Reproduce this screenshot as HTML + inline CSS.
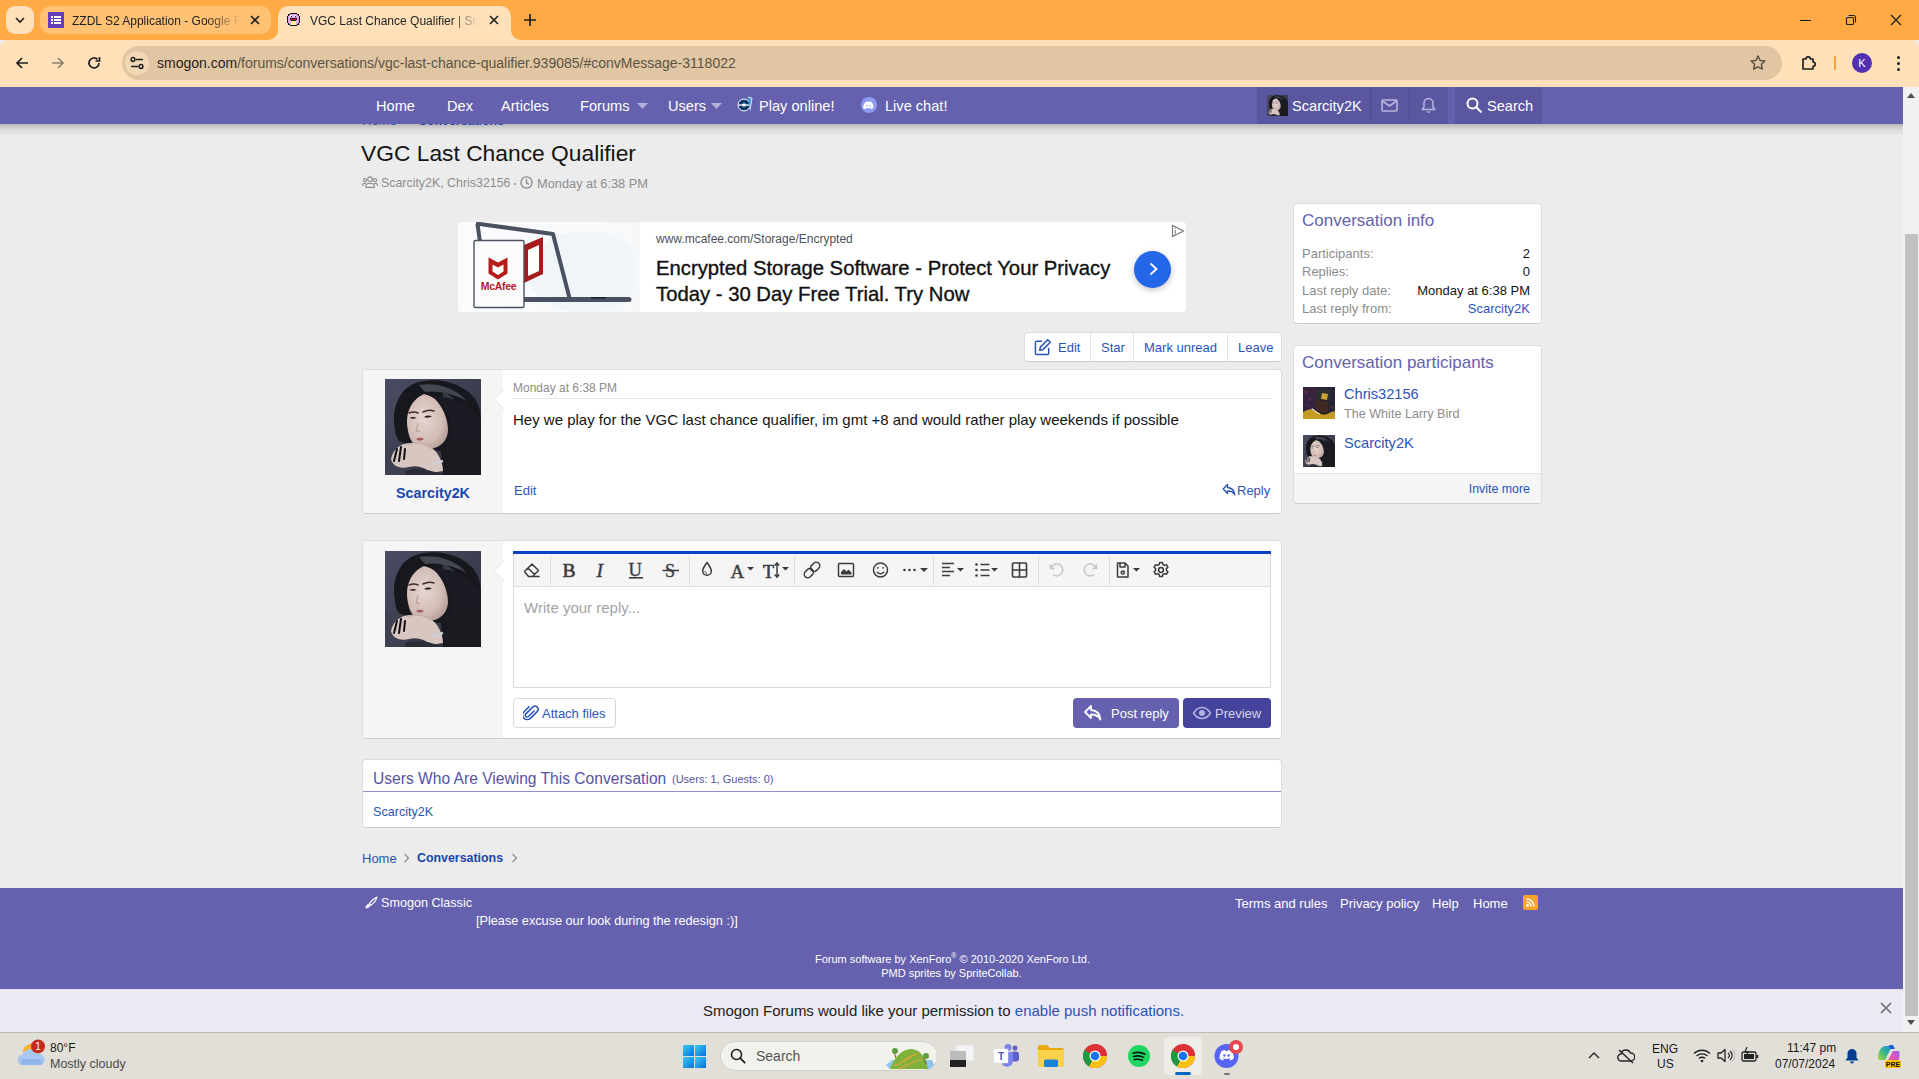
<!DOCTYPE html>
<html><head><meta charset="utf-8">
<style>
*{box-sizing:border-box;margin:0;padding:0}
html,body{width:1919px;height:1079px;overflow:hidden;font-family:"Liberation Sans",sans-serif;background:#ececec;position:relative}
.a{position:absolute}
.nw{white-space:nowrap}
/* chrome */
#frame{left:0;top:0;width:1919px;height:40px;background:#ffaa45}
#toolbar{left:0;top:40px;width:1919px;height:47px;background:#ffe0b9;border-radius:8px 8px 0 0}
.tabdd{left:6px;top:6px;width:28px;height:28px;border-radius:9px;background:#ffe0b9}
.tab1{left:40px;top:6px;width:231px;height:28px;border-radius:10px;background:#ffc173}
.tab2{left:278px;top:6px;width:233px;height:34px;border-radius:10px 10px 0 0;background:#ffe0b9}
.tabtxt{font-size:12px;color:#1f1f1f}
#url{left:122px;top:46px;width:1660px;height:34px;border-radius:17px;background:#e0c6a2}
/* nav */
#nav{left:0;top:87px;width:1903px;height:37px;background:#6561ae}
#navsh{left:0;top:124px;width:1903px;height:12px;background:linear-gradient(180deg,rgba(0,0,0,.22),rgba(0,0,0,.08) 45%,rgba(0,0,0,0))}
.nv{color:#fff;font-size:14.6px;top:97.5px}
/* scrollbar */
#sb{left:1903px;top:87px;width:16px;height:945px;background:#f1f1f1}
/* blocks */
.blk{background:#fff;border:1px solid #dcdcdc;border-radius:4px}
.lnk{color:#2a54b8}
#foot{left:0;top:888px;width:1903px;height:101px;background:#6561ae}
#notif{left:0;top:989px;width:1903px;height:43px;background:#eae9f4;border-top:1px solid #e4e4e8}
#task{left:0;top:1032px;width:1919px;height:47px;background:#e1dfd8}
.btxt{top:340px;font-size:13px;color:#2a54b8}
.sl{font-size:13px;color:#8c8c8c}
.sv{font-size:13px;color:#141414;width:150px;text-align:right}
.av{width:96px;height:96px;background:radial-gradient(ellipse 22% 18% at 55% 45%,#d9c6c0 0,#cdb5ae 60%,transparent 100%),radial-gradient(ellipse 30% 15% at 40% 75%,#cbb5ad 0,#b39a92 60%,transparent 100%),radial-gradient(ellipse 60% 60% at 40% 30%,#222 0,#1d1d22 60%,transparent 100%),linear-gradient(160deg,#55586a 0,#3a3c4a 50%,#2a2b33 100%)}
.av32{width:32px;height:32px;background:radial-gradient(ellipse 22% 18% at 55% 45%,#d9c6c0 0,#cdb5ae 60%,transparent 100%),radial-gradient(ellipse 30% 15% at 40% 75%,#cbb5ad 0,#b39a92 60%,transparent 100%),radial-gradient(ellipse 60% 60% at 40% 30%,#222 0,#1d1d22 60%,transparent 100%),linear-gradient(160deg,#55586a 0,#3a3c4a 50%,#2a2b33 100%)}
.ft{font-size:13px;color:#fff}
</style></head><body>
<svg width="0" height="0" style="position:absolute">
<defs>
<linearGradient id="avbg" x1="0" y1="0" x2="1" y2="1"><stop offset="0" stop-color="#4a4d63"/><stop offset=".6" stop-color="#3a3c4c"/><stop offset="1" stop-color="#2c2d36"/></linearGradient>
<radialGradient id="face" cx=".45" cy=".45" r=".6"><stop offset="0" stop-color="#e6d6d2"/><stop offset=".7" stop-color="#d2bcb6"/><stop offset="1" stop-color="#b8a09a"/></radialGradient>
<symbol id="girl" viewBox="0 0 96 96">
<rect width="96" height="96" fill="url(#avbg)"/>
<path d="M0 60 C10 70 20 80 24 96 L0 96z" fill="#3e4152"/>
<path d="M10 50 C6 30 14 8 34 3 C55 -2 78 4 90 20 C96 28 96 40 96 50 L96 96 L58 96 L56 72 C40 70 22 66 14 62 C11 58 10 54 10 50z" fill="#17181e"/>
<path d="M34 6 C52 3 70 9 82 22 C70 15 52 11 40 13z" fill="#50525e" opacity=".8"/>
<path d="M58 12 C72 20 84 34 90 52 C80 40 70 28 58 18z" fill="#464854" opacity=".7"/>
<path d="M72 30 C80 40 86 52 88 64 C82 54 76 44 70 36z" fill="#3c3e4a" opacity=".6"/>
<path d="M22 18 C30 13 42 14 50 20 C58 28 63 40 63 52 C62 62 56 68 46 70 C36 71 28 66 24 58 C20 50 19 40 19 32 C19 26 20 21 22 18z" fill="url(#face)"/>
<path d="M16 20 C22 12 34 10 42 14 C32 17 26 24 23 34 C21 42 22 52 26 62 C18 56 13 46 13 36 C13 30 14 24 16 20z" fill="#17181e"/>
<path d="M48 18 C58 24 66 36 67 50 C67 58 64 64 60 68 L62 96 L96 96 L96 44 C88 28 70 16 48 18z" fill="#1b1c23"/>
<path d="M24 34 q5 -2 9 0 M38 33 q6 -3 11 -1" stroke="#3a2e30" stroke-width="1.5" fill="none" stroke-linecap="round"/>
<path d="M24.5 39 q3.5 -2 7 0 q-3.5 1.5 -7 0z" fill="#251c1e"/><path d="M39 38 q4 -2.5 8 -.5 q-4 2 -8 .5z" fill="#251c1e"/>
<path d="M33 44 l-2 8 q2 1 4 0" stroke="#b89a94" stroke-width="1" fill="none"/>
<path d="M31 60 q4 -2.5 8 0 q-4 3.5 -8 0z" fill="#a35a5a"/>
<path d="M6 80 C8 70 16 64 26 64 C36 64 46 66 52 74 C56 80 58 86 58 92 L46 94 C40 88 32 86 24 88 C16 90 8 88 6 80z" fill="#d8c6c1"/>
<path d="M22 66 C30 62 40 64 46 70" stroke="#c4aea8" stroke-width="1.2" fill="none"/>
<path d="M12 70 l-3 12 M16 68 l-2 14 M20 70 l-1 10" stroke="#101014" stroke-width="2" stroke-linecap="round"/>
<path d="M48 85 l10 -3" stroke="#cfd0d6" stroke-width="2.4"/>
<path d="M20 92 C30 88 44 90 58 96 L20 96z" fill="#2a2c36"/>
<path d="M60 66 C70 60 86 58 96 62 L96 96 L60 96z" fill="#1a1b21"/>
</symbol>
<symbol id="chris" viewBox="0 0 32 32">
<rect width="32" height="32" fill="#2a2238"/>
<path d="M0 0h14v24H0z" fill="#3a2640" opacity=".8"/>
<circle cx="3" cy="5" r="2" fill="#6a3040" opacity=".6"/><circle cx="7" cy="12" r="2" fill="#5a2a48" opacity=".6"/><circle cx="4" cy="18" r="2" fill="#40305a" opacity=".6"/><circle cx="29" cy="20" r="2" fill="#5a2a40" opacity=".6"/>
<path d="M13 6 C14 1.5 24 1 27 4 L28 12 L13 13z" fill="#2a3030"/>
<path d="M13 12 L31 17 L29 19 L13 14z" fill="#1f2626"/>
<path d="M19 6 l6 1 -1 6 -6 -1z" fill="#c9a232"/>
<path d="M12 13 C11 20 13 26 18 28 C23 27 26 23 26 17 L24 14z" fill="#3e2a22"/>
<path d="M14 24 C16 27 20 28 22 26" stroke="#1e1410" stroke-width="2" fill="none"/>
<path d="M0 25 C5 22 10 21 13 24 C17 28 22 29 28 25 L32 24 L32 32 L0 32z" fill="#c59a20"/>
<path d="M9 21.5 C11 24 14 26 17 27" stroke="#e6e6e6" stroke-width="1.2" fill="none"/>
</symbol>
<symbol id="chromei" viewBox="0 0 24 24"><circle cx="12" cy="12" r="12" fill="#db3236"/><path d="M12 12L1.6 6A12 12 0 0 0 6 22.4z" fill="#1e9a45"/><path d="M12 12L6 22.4A12 12 0 0 0 24 12z" fill="#fbc116"/><path d="M12 12h12A12 12 0 0 0 12 0z" fill="#db3236"/><circle cx="12" cy="12" r="5.5" fill="#fff"/><circle cx="12" cy="12" r="4.3" fill="#1a73e8"/></symbol>
</defs>
</svg>

<div id="frame" class="a"></div>
<div class="a tabdd"></div>
<div class="a tab1"></div>
<div class="a tab2"></div>
<div id="toolbar" class="a"></div>
<svg class="a" style="left:268px;top:30px" width="10" height="10" viewBox="0 0 10 10"><path d="M0 10A10 10 0 0 0 10 0V10z" fill="#ffe0b9"/></svg>
<svg class="a" style="left:511px;top:30px" width="10" height="10" viewBox="0 0 10 10"><path d="M10 10A10 10 0 0 1 0 0V10z" fill="#ffe0b9"/></svg>

<div id="url" class="a"></div>
<!-- tab dropdown -->
<svg class="a" style="left:14px;top:14px" width="12" height="12" viewBox="0 0 12 12"><path d="M2 4l4 4 4-4" fill="none" stroke="#1f1f1f" stroke-width="1.6"/></svg>
<!-- tab1 -->
<div class="a" style="left:48px;top:12px;width:16px;height:16px;background:#673ab7;border-radius:1px"></div>
<div class="a" style="left:51px;top:16px;width:2px;height:2px;background:#fff"></div>
<div class="a" style="left:54px;top:16px;width:7px;height:2px;background:#fff"></div>
<div class="a" style="left:51px;top:19px;width:2px;height:2px;background:#fff"></div>
<div class="a" style="left:54px;top:19px;width:7px;height:2px;background:#fff"></div>
<div class="a" style="left:51px;top:22px;width:2px;height:2px;background:#fff"></div>
<div class="a" style="left:54px;top:22px;width:7px;height:2px;background:#fff"></div>
<div class="a nw tabtxt" style="left:72px;top:14px;width:168px;overflow:hidden;-webkit-mask-image:linear-gradient(90deg,#000 80%,transparent)">ZZDL S2 Application - Google Forms</div>
<svg class="a" style="left:250px;top:15px" width="10" height="10" viewBox="0 0 10 10"><path d="M1 1l8 8M9 1l-8 8" stroke="#1f1f1f" stroke-width="1.6"/></svg>
<!-- tab2 -->
<svg class="a" style="left:286px;top:12px" width="15" height="15" viewBox="0 0 15 15" shape-rendering="crispEdges"><path d="M4 1h7v1h2v2h1v7h-1v2h-2v1H4v-1H2v-2H1V4h1V2h2z" fill="#111"/><path d="M4 2h7v1h1v1h1v7h-1v1h-1v1H4v-1H3v-1H2V4h1V3h1z" fill="#e3a6ef"/><rect x="4" y="3" width="2" height="2" fill="#fff"/><rect x="8" y="3" width="2" height="2" fill="#fff"/><rect x="5" y="4" width="1" height="1" fill="#111"/><rect x="9" y="4" width="1" height="1" fill="#111"/><path d="M4 6h7v2h-1v1H5V8H4z" fill="#111"/><rect x="5" y="7" width="5" height="1" fill="#e01020"/><rect x="5" y="9" width="5" height="4" fill="#f4f49a"/></svg>

<div class="a nw tabtxt" style="left:310px;top:14px;width:168px;overflow:hidden;-webkit-mask-image:linear-gradient(90deg,#000 85%,transparent)">VGC Last Chance Qualifier | Smogon Forums</div>
<svg class="a" style="left:489px;top:15px" width="10" height="10" viewBox="0 0 10 10"><path d="M1 1l8 8M9 1l-8 8" stroke="#1f1f1f" stroke-width="1.6"/></svg>
<svg class="a" style="left:523px;top:13px" width="14" height="14" viewBox="0 0 14 14"><path d="M7 1v12M1 7h12" stroke="#1f1f1f" stroke-width="1.7"/></svg>
<!-- window controls -->
<div class="a" style="left:1800px;top:20px;width:11px;height:1px;background:#1f1f1f"></div>
<svg class="a" style="left:1845px;top:14px" width="12" height="12" viewBox="0 0 12 12"><rect x="1.5" y="3.5" width="7" height="7" rx="1" fill="none" stroke="#1f1f1f" stroke-width="1.1"/><path d="M3.5 1.5h5a2 2 0 0 1 2 2v5" fill="none" stroke="#1f1f1f" stroke-width="1.1"/></svg>
<svg class="a" style="left:1890px;top:14px" width="12" height="12" viewBox="0 0 12 12"><path d="M1 1l10 10M11 1l-10 10" stroke="#1f1f1f" stroke-width="1.2"/></svg>
<!-- toolbar icons -->
<svg class="a" style="left:14px;top:55px" width="16" height="16" viewBox="0 0 16 16"><path d="M14 8H3M8 3L3 8l5 5" fill="none" stroke="#1f1f1f" stroke-width="1.7"/></svg>
<svg class="a" style="left:50px;top:55px" width="16" height="16" viewBox="0 0 16 16"><path d="M2 8h11M8 3l5 5-5 5" fill="none" stroke="#8e8170" stroke-width="1.7"/></svg>
<svg class="a" style="left:86px;top:55px" width="16" height="16" viewBox="0 0 16 16"><path d="M13 8a5 5 0 1 1-1.5-3.6" fill="none" stroke="#1f1f1f" stroke-width="1.7"/><path d="M13.5 2v4h-4" fill="none" stroke="#1f1f1f" stroke-width="1.7"/></svg>
<!-- url bar -->
<div class="a" style="left:125px;top:51px;width:24px;height:24px;border-radius:12px;background:#f2d9b6"></div>
<svg class="a" style="left:129px;top:55px" width="16" height="16" viewBox="0 0 16 16"><path d="M7 4.5h7M2 11.5h7" stroke="#1f1f1f" stroke-width="1.6"/><circle cx="4" cy="4.5" r="1.9" fill="none" stroke="#1f1f1f" stroke-width="1.5"/><circle cx="12" cy="11.5" r="1.9" fill="none" stroke="#1f1f1f" stroke-width="1.5"/></svg>
<div class="a nw" style="left:157px;top:55px;font-size:14px;color:#1f1f1f">smogon.com<span style="color:#5d5346">/forums/conversations/vgc-last-chance-qualifier.939085/#convMessage-3118022</span></div>
<svg class="a" style="left:1749px;top:54px" width="18" height="18" viewBox="0 0 18 18"><path d="M9 2l2.1 4.4 4.8.6-3.5 3.3.9 4.8L9 12.8l-4.3 2.3.9-4.8L2.1 7l4.8-.6z" fill="none" stroke="#5b5247" stroke-width="1.5" stroke-linejoin="round"/></svg>
<svg class="a" style="left:1799px;top:53px" width="20" height="20" viewBox="0 0 20 20"><path d="M4 6h3a2.2 2.2 0 0 1 4.4 0H14v3a2.2 2.2 0 0 1 0 4.4V16H4z" fill="none" stroke="#1f1f1f" stroke-width="1.7" stroke-linejoin="round"/></svg>
<div class="a" style="left:1834px;top:56px;width:2px;height:14px;background:#f5a440"></div>
<div class="a" style="left:1852px;top:53px;width:20px;height:20px;border-radius:50%;background:#5230b0;color:#fff;font-size:11px;text-align:center;line-height:20px">K</div>
<div class="a" style="left:1897px;top:56px;width:3px;height:3px;border-radius:50%;background:#1f1f1f"></div>
<div class="a" style="left:1897px;top:62px;width:3px;height:3px;border-radius:50%;background:#1f1f1f"></div>
<div class="a" style="left:1897px;top:68px;width:3px;height:3px;border-radius:50%;background:#1f1f1f"></div>

<div id="sb" class="a"></div>
<div id="navsh" class="a"></div>
<!-- hidden breadcrumb under nav -->
<div class="a nw" style="left:362px;top:113px;font-size:13px;color:#2a54b8">Home</div><div class="a nw" style="left:418px;top:114px;font-size:12.4px;font-weight:bold;color:#1a45b0">Conversations</div>
<!-- title -->
<div class="a nw" style="left:361px;top:140px;font-size:22.8px;color:#141414">VGC Last Chance Qualifier</div>
<svg class="a" style="left:362px;top:176px" width="16" height="12" viewBox="0 0 16 12"><circle cx="8" cy="3.2" r="2.3" fill="none" stroke="#8c8c8c" stroke-width="1.2"/><path d="M3.8 11.3v-1.2a2.6 2.6 0 0 1 2.6-2.6h3.2a2.6 2.6 0 0 1 2.6 2.6v1.2z" fill="none" stroke="#8c8c8c" stroke-width="1.2"/><circle cx="3" cy="4.2" r="1.6" fill="none" stroke="#8c8c8c" stroke-width="1.1"/><circle cx="13" cy="4.2" r="1.6" fill="none" stroke="#8c8c8c" stroke-width="1.1"/><path d="M.6 10v-.8A1.8 1.8 0 0 1 2.4 7.4h1.4M15.4 10v-.8a1.8 1.8 0 0 0-1.8-1.8h-1.4" fill="none" stroke="#8c8c8c" stroke-width="1.1"/></svg>
<div class="a nw" style="left:381px;top:176px;font-size:12.4px;color:#8c8c8c">Scarcity2K, Chris32156</div><div class="a" style="left:514px;top:183px;width:2px;height:2px;border-radius:1px;background:#8c8c8c"></div>
<svg class="a" style="left:520px;top:176px" width="13" height="13" viewBox="0 0 13 13"><circle cx="6.5" cy="6.5" r="5.6" fill="none" stroke="#8c8c8c" stroke-width="1.3"/><path d="M6.5 3v3.8l2.4 1.6" fill="none" stroke="#8c8c8c" stroke-width="1.3"/></svg>
<div class="a nw" style="left:537px;top:176px;font-size:12.8px;color:#8c8c8c">Monday at 6:38 PM</div>
<!-- ad -->
<div class="a" style="left:458px;top:222px;width:728px;height:90px;background:#fff;border-radius:4px;overflow:hidden">
 <div class="a" style="left:0;top:0;width:182px;height:90px;background:linear-gradient(90deg,#fbfcfd,#f6f8fa)"></div>
 <div class="a" style="left:70px;top:10px;width:108px;height:80px;border-radius:50% 40% 40% 50%;background:#eef4f8;opacity:.9"></div>
 <svg class="a" style="left:0;top:0" width="182" height="90" viewBox="0 0 182 90">
  <path d="M18 1.5 L95 12 L111.5 76" fill="none" stroke="#4a5262" stroke-width="4" stroke-linejoin="round"/>
  <path d="M19.5 2 L22 20" fill="none" stroke="#4a5262" stroke-width="4"/>
  <path d="M64 77.5 H171" stroke="#4a5262" stroke-width="5" stroke-linecap="round"/>
  <path d="M133 75.8 H148" stroke="#1f232b" stroke-width="1.6"/>
  <path d="M66 23 l19 -8 v37 l-19 9z" fill="#a51c1c"/>
  <path d="M70 28 l11 -5 v26 l-11 5z" fill="#fff"/>
  <path d="M66 23 l-4 3 v34 l4 1z" fill="#7a1212"/>
  <rect x="16" y="18.5" width="50" height="67" rx="1.5" fill="#fbfbfb" stroke="#4a5262" stroke-width="1.4"/>
  <path d="M30.5 35.5 l9.5 5 9.5-5 v16 l-9.5 6 -9.5-6z" fill="#b71c1c"/>
  <path d="M34.5 42.5 l5.5 3 5.5-3 v7 l-5.5 3.5 -5.5-3.5z" fill="#fff"/>
  <text x="40.5" y="68" text-anchor="middle" font-family="Liberation Sans" font-weight="bold" font-size="10.5" letter-spacing="-.3" fill="#b71c1c">McAfee</text>
 </svg>
 <div class="a nw" style="left:198px;top:10px;font-size:12px;color:#4d5156">www.mcafee.com/Storage/Encrypted</div>
 <div class="a nw" style="left:198px;top:35px;font-size:20.3px;line-height:26px;color:#111;-webkit-text-stroke:.35px #111;top:33px">Encrypted Storage Software - Protect Your Privacy<br>Today - 30 Day Free Trial. Try Now</div>
 <div class="a" style="left:676px;top:29px;width:37px;height:37px;border-radius:50%;background:#2366e8;box-shadow:0 2px 6px rgba(0,0,0,.25)"></div>
 <svg class="a" style="left:687px;top:39px" width="16" height="16" viewBox="0 0 16 16"><path d="M5.5 2.5l6 5.5-6 5.5" fill="none" stroke="#fff" stroke-width="1.8"/></svg>
 <svg class="a" style="left:713px;top:2px" width="14" height="14" viewBox="0 0 14 14"><path d="M1.5 1.5v11l11-5.5z" fill="none" stroke="#777" stroke-width="1.1"/><path d="M4.2 6v4.5" stroke="#777" stroke-width="1"/><circle cx="4.2" cy="4.3" r=".6" fill="#777"/></svg>
</div>

<!-- action buttons -->
<div class="a" style="left:1024px;top:332px;width:258px;height:30px;background:#fff;border:1px solid #dcdcdc;border-bottom-color:#cdcdcd;border-radius:4px"></div>
<div class="a" style="left:1090px;top:333px;width:1px;height:28px;background:#e2e2e2"></div>
<div class="a" style="left:1133px;top:333px;width:1px;height:28px;background:#e2e2e2"></div>
<div class="a" style="left:1227px;top:333px;width:1px;height:28px;background:#e2e2e2"></div>
<svg class="a" style="left:1034px;top:338px" width="18" height="18" viewBox="0 0 19 19"><path d="M8.5 3.5H3a1.5 1.5 0 0 0-1.5 1.5v11A1.5 1.5 0 0 0 3 17.5h11a1.5 1.5 0 0 0 1.5-1.5V10.5" fill="none" stroke="#2a54b8" stroke-width="1.6"/><path d="M14.5 1.8l2.7 2.7-7.8 7.8-3.4.7.7-3.4z" fill="none" stroke="#2a54b8" stroke-width="1.6" stroke-linejoin="round"/></svg>
<div class="a nw btxt" style="left:1058px">Edit</div>
<div class="a nw btxt" style="left:1101px">Star</div>
<div class="a nw btxt" style="left:1144px">Mark unread</div>
<div class="a nw btxt" style="left:1238px">Leave</div>
<!-- message -->
<div class="a" style="left:362px;top:369px;width:920px;height:145px;background:#fff;border:1px solid #dcdcdc;border-bottom-color:#cdcdcd;border-radius:4px;overflow:hidden">
 <div class="a" style="left:0;top:0;width:140px;height:145px;background:#f5f5f5"></div>
</div>
<svg class="a" style="left:494px;top:389px" width="10" height="20" viewBox="0 0 10 20"><path d="M10 0L0 10l10 10z" fill="#fff"/><path d="M10 0L0 10l10 10" fill="none" stroke="#e3e3e3" stroke-width="1"/></svg>
<svg class="a" style="left:385px;top:379px" width="96" height="96"><use href="#girl"/></svg>
<div class="a nw" style="left:363px;top:485px;width:140px;text-align:center;font-size:14.3px;font-weight:bold;color:#1a45b0">Scarcity2K</div>
<div class="a nw" style="left:513px;top:381px;font-size:12px;color:#8c8c8c">Monday at 6:38 PM</div>
<div class="a" style="left:513px;top:398px;width:758px;height:1px;background:#e6e6e6"></div>
<div class="a nw" style="left:513px;top:411px;font-size:15px;color:#141414">Hey we play for the VGC last chance qualifier, im gmt +8 and would rather play weekends if possible</div>
<div class="a nw" style="left:514px;top:483px;font-size:13px;color:#2a54b8">Edit</div>
<svg class="a" style="left:1222px;top:483px" width="14" height="13" viewBox="0 0 14 13"><path d="M5.5 1.5L1.2 6l4.3 4.5V8c3.5 0 5.8.8 7.3 3.8-.3-3.8-2.5-6.8-7.3-7.3z" fill="none" stroke="#2a54b8" stroke-width="1.3" stroke-linejoin="round"/></svg>
<div class="a nw" style="left:1237px;top:483px;font-size:13px;color:#2a54b8">Reply</div>
<!-- sidebar info -->
<div class="a" style="left:1293px;top:203px;width:249px;height:121px;background:#fff;border:1px solid #dcdcdc;border-bottom-color:#cdcdcd;border-radius:4px"></div>
<div class="a nw" style="left:1302px;top:211px;font-size:17px;color:#6561ae">Conversation info</div>
<div class="a nw sl" style="left:1302px;top:246px">Participants:</div><div class="a nw sv" style="left:1380px;top:246px">2</div>
<div class="a nw sl" style="left:1302px;top:264px">Replies:</div><div class="a nw sv" style="left:1380px;top:264px">0</div>
<div class="a nw sl" style="left:1302px;top:283px">Last reply date:</div><div class="a nw sv" style="left:1380px;top:283px">Monday at 6:38 PM</div>
<div class="a nw sl" style="left:1302px;top:301px">Last reply from:</div><div class="a nw sv" style="left:1380px;top:301px;color:#2a54b8">Scarcity2K</div>
<!-- sidebar participants -->
<div class="a" style="left:1293px;top:345px;width:249px;height:159px;background:#fff;border:1px solid #dcdcdc;border-bottom-color:#cdcdcd;border-radius:4px;overflow:hidden">
 <div class="a" style="left:0;top:127px;width:249px;height:32px;background:#f5f5f5;border-top:1px solid #e3e3e3"></div>
</div>
<div class="a nw" style="left:1302px;top:353px;font-size:17px;color:#6561ae">Conversation participants</div>
<svg class="a" style="left:1303px;top:387px" width="32" height="32"><use href="#chris"/></svg>
<div class="a nw" style="left:1344px;top:386px;font-size:14.6px;color:#2a54b8">Chris32156</div>
<div class="a nw" style="left:1344px;top:407px;font-size:12.6px;color:#8c8c8c">The White Larry Bird</div>
<svg class="a" style="left:1303px;top:435px" width="32" height="32"><use href="#girl"/></svg>
<div class="a nw" style="left:1344px;top:435px;font-size:14.6px;color:#2a54b8">Scarcity2K</div>
<div class="a nw" style="left:1430px;top:482px;width:100px;text-align:right;font-size:12.4px;color:#2a54b8">Invite more</div>

<!-- reply editor -->
<div class="a" style="left:362px;top:540px;width:920px;height:199px;background:#fff;border:1px solid #dcdcdc;border-bottom-color:#cdcdcd;border-radius:4px;overflow:hidden">
 <div class="a" style="left:0;top:0;width:140px;height:199px;background:#f5f5f5"></div>
</div>
<svg class="a" style="left:494px;top:561px" width="10" height="20" viewBox="0 0 10 20"><path d="M10 0L0 10l10 10z" fill="#fff"/><path d="M10 0L0 10l10 10" fill="none" stroke="#e3e3e3" stroke-width="1"/></svg>
<svg class="a" style="left:385px;top:551px" width="96" height="96"><use href="#girl"/></svg>
<div class="a" style="left:513px;top:551px;width:758px;height:137px;border:1px solid #d8d8d8;border-top:0;background:#fff"></div>
<div class="a" style="left:513px;top:551px;width:758px;height:3px;background:#0b3fc4"></div>
<div class="a" style="left:514px;top:554px;width:756px;height:33px;background:#f5f5f5;border-bottom:1px solid #dedede"></div>
<div class="a" style="left:550px;top:556px;width:1px;height:29px;background:#dedede"></div>
<div class="a" style="left:689px;top:556px;width:1px;height:29px;background:#dedede"></div>
<div class="a" style="left:794px;top:556px;width:1px;height:29px;background:#dedede"></div>
<div class="a" style="left:933px;top:556px;width:1px;height:29px;background:#dedede"></div>
<div class="a" style="left:1038px;top:556px;width:1px;height:29px;background:#dedede"></div>
<div class="a" style="left:1109px;top:556px;width:1px;height:29px;background:#dedede"></div>
<svg class="a" style="left:513px;top:553px" width="758" height="34" viewBox="513 553 758 34">
 <g fill="none" stroke="#3c3c3c" stroke-width="1.5" stroke-linejoin="round" stroke-linecap="round">
  <path d="M524.5 571.5l7.5-7.5 6.5 6.5-6 6h-4z M528 568l6.5 6.5 M529 576.5h10"/>
  <g transform="rotate(-45 812 570)"><rect x="802.5" y="566.5" width="10" height="7" rx="3.5"/><rect x="811.5" y="566.5" width="10" height="7" rx="3.5"/></g>
  <rect x="838.5" y="563.5" width="15" height="13" rx="1"/>
  <circle cx="880.5" cy="570" r="7"/>
  <path d="M877.2 572.3q3.3 2.8 6.6 0"/>
  <path d="M942 563.5h12M942 567.5h8M942 571.5h12M942 575.5h8" stroke-width="1.7" stroke-linecap="butt"/>
  <path d="M980.5 564.5h9M980.5 570h9M980.5 575.5h9" stroke-width="1.7" stroke-linecap="butt"/>
  <rect x="1012.5" y="563" width="14" height="14" rx="1" stroke-width="1.6"/><path d="M1012.5 570h14M1019.5 563v14" stroke-width="1.6"/>
  <path d="M1117.5 563h7.5l3 3v11h-10.5z M1120 563v4h5v-4"/><circle cx="1122.8" cy="572.5" r="1.6"/>
  <circle cx="1161" cy="570" r="2.4"/>
  <path d="M1159.6 562.5h2.8l.5 2 1.6.9 2-.6 1.4 2.4-1.5 1.4v1.8l1.5 1.4-1.4 2.4-2-.6-1.6.9-.5 2h-2.8l-.5-2-1.6-.9-2 .6-1.4-2.4 1.5-1.4v-1.8l-1.5-1.4 1.4-2.4 2 .6 1.6-.9z"/>
  <path d="M707 562.5c-2 3-4.3 5.5-4.3 8.5a4.3 4.3 0 0 0 8.6 0c0-3-2.3-5.5-4.3-8.5z"/>
  <path d="M705 571.5a2 2 0 0 0 1.5 2" stroke-width="1"/>
 </g>
 <g fill="none" stroke="#c4c4c4" stroke-width="1.5">
  <path d="M1050.5 564.5v4h4 M1051 568.5a6 6 0 1 1 2 6"/>
  <path d="M1096.5 564.5v4h-4 M1096 568.5a6 6 0 1 0 -2 6"/>
 </g>
 <g fill="#3c3c3c">
  <circle cx="976.5" cy="564.5" r="1.3"/><circle cx="976.5" cy="570" r="1.3"/><circle cx="976.5" cy="575.5" r="1.3"/>
  <circle cx="904.5" cy="570" r="1.3"/><circle cx="909.5" cy="570" r="1.3"/><circle cx="914.5" cy="570" r="1.3"/>
  <circle cx="877.8" cy="567.8" r=".9"/><circle cx="883.2" cy="567.8" r=".9"/>
  <path d="M841 574.5v-2.5l3-3 2.5 2.5 2-2 3 3v2z"/>
  <path d="M920 568h8l-4 4z M747 567h7l-3.5 3.5z M782 567h7l-3.5 3.5z M957 568h7l-3.5 3.5z M991 568h7l-3.5 3.5z M1133 568h7l-3.5 3.5z"/>
 </g>
 <text x="562.5" y="577" font-family="Liberation Serif" font-size="19.5" fill="#3c3c3c" stroke="#3c3c3c" stroke-width=".6">B</text>
 <text x="596.5" y="577" font-family="Liberation Serif" font-style="italic" font-size="19.5" fill="#3c3c3c" stroke="#3c3c3c" stroke-width=".4">I</text>
 <text x="628.5" y="575.5" font-family="Liberation Serif" font-size="18.5" fill="#3c3c3c" stroke="#3c3c3c" stroke-width=".4">U</text>
 <path d="M629 577.8h14" stroke="#3c3c3c" stroke-width="1.6"/>
 <text x="665" y="577" font-family="Liberation Serif" font-size="18" fill="#3c3c3c" stroke="#3c3c3c" stroke-width=".4">S</text>
 <path d="M662.5 570.5h16.5" stroke="#3c3c3c" stroke-width="1.5"/>
 <text x="730.5" y="577.5" font-family="Liberation Serif" font-size="19" fill="#3c3c3c" stroke="#3c3c3c" stroke-width=".4">A</text>
 <text x="763" y="577.5" font-family="Liberation Serif" font-size="18" fill="#3c3c3c" stroke="#3c3c3c" stroke-width=".6">T</text>
 <path d="M777 563.5v13M774.8 565.5l2.2-2.5 2.2 2.5M774.8 574.5l2.2 2.5 2.2-2.5" fill="none" stroke="#3c3c3c" stroke-width="1.5"/>
</svg>
<div class="a nw" style="left:524px;top:599px;font-size:15px;color:#a3a3a3">Write your reply...</div>
<div class="a" style="left:513px;top:698px;width:103px;height:30px;background:#fff;border:1px solid #d8d8d8;border-radius:4px"></div>
<svg class="a" style="left:523px;top:705px" width="16" height="16" viewBox="0 0 16 16"><path d="M11.5 5.5l-6 6a1.8 1.8 0 0 1-2.6-2.6l7-7a3.2 3.2 0 0 1 4.5 4.5l-7 7a4.6 4.6 0 0 1-6.5-6.5l5.5-5.5" fill="none" stroke="#2a54b8" stroke-width="1.5"/></svg>
<div class="a nw" style="left:542px;top:706px;font-size:13px;color:#2a54b8">Attach files</div>
<div class="a" style="left:1073px;top:698px;width:106px;height:30px;background:#6561ae;border-radius:4px"></div>
<svg class="a" style="left:1083px;top:704px" width="20" height="18" viewBox="0 0 20 18"><path d="M8 2L2 8l6 6v-3.5c4.5 0 7.5 1 9.5 5-.5-5-3.5-9-9.5-9.5z" fill="none" stroke="#fff" stroke-width="1.8" stroke-linejoin="round"/></svg>
<div class="a nw" style="left:1111px;top:706px;font-size:13px;color:#fff">Post reply</div>
<div class="a" style="left:1183px;top:698px;width:88px;height:30px;background:#46439a;border-radius:4px"></div>
<svg class="a" style="left:1192px;top:706px" width="20" height="14" viewBox="0 0 20 14"><path d="M1.5 7C4 3 7 1.5 10 1.5S16 3 18.5 7C16 11 13 12.5 10 12.5S4 11 1.5 7z" fill="none" stroke="#b2b0e0" stroke-width="1.6"/><circle cx="10" cy="7" r="3" fill="#b2b0e0"/></svg>
<div class="a nw" style="left:1215px;top:706px;font-size:13px;color:#d5d3f0">Preview</div>
<!-- users viewing -->
<div class="a" style="left:362px;top:759px;width:920px;height:69px;background:#fff;border:1px solid #dcdcdc;border-bottom-color:#cdcdcd;border-radius:4px;overflow:hidden">
 <div class="a" style="left:0;top:31px;width:920px;height:1px;background:#8f8ccf"></div>
</div>
<div class="a nw" style="left:373px;top:770px;font-size:15.6px;color:#5553a2">Users Who Are Viewing This Conversation</div><div class="a nw" style="left:672px;top:773px;font-size:11px;color:#5553a2">(Users: 1, Guests: 0)</div>
<div class="a nw" style="left:373px;top:805px;font-size:12.6px;color:#2a54b8">Scarcity2K</div>
<!-- breadcrumb -->
<div class="a nw" style="left:362px;top:851px;font-size:13px;color:#2a54b8">Home</div>
<svg class="a" style="left:403px;top:853px" width="7" height="10" viewBox="0 0 7 10"><path d="M1.5 1l4 4-4 4" fill="none" stroke="#8c8c8c" stroke-width="1.3"/></svg>
<div class="a nw" style="left:417px;top:851px;font-size:12.4px;font-weight:bold;color:#1a45b0">Conversations</div>
<svg class="a" style="left:511px;top:853px" width="7" height="10" viewBox="0 0 7 10"><path d="M1.5 1l4 4-4 4" fill="none" stroke="#8c8c8c" stroke-width="1.3"/></svg>

<div id="nav" class="a"></div>
<!-- nav items -->
<div class="a nw nv" style="left:376px">Home</div>
<div class="a nw nv" style="left:447px">Dex</div>
<div class="a nw nv" style="left:501px">Articles</div>
<div class="a nw nv" style="left:580px">Forums</div>
<svg class="a" style="left:637px;top:103px" width="11" height="7" viewBox="0 0 11 7"><path d="M0 0h11L5.5 6z" fill="#b3b0d9"/></svg>
<div class="a nw nv" style="left:668px">Users</div>
<svg class="a" style="left:711px;top:103px" width="11" height="7" viewBox="0 0 11 7"><path d="M0 0h11L5.5 6z" fill="#b3b0d9"/></svg>
<svg class="a" style="left:737px;top:96px" width="16" height="17" viewBox="0 0 16 17"><circle cx="7" cy="9" r="6" fill="#0f3d6e" stroke="#fff" stroke-width="1"/><path d="M1.5 9h11" stroke="#fff" stroke-width="1.3"/><circle cx="7" cy="9" r="1.8" fill="#fff"/><path d="M11 1l4 1-2 12" fill="#3aa0e0" stroke="#fff" stroke-width=".8"/></svg>
<div class="a nw nv" style="left:759px">Play online!</div>
<div class="a" style="left:861px;top:97px;width:16px;height:16px;border-radius:50%;background:#8b9bf3"></div>
<svg class="a" style="left:863px;top:101px" width="11" height="9" viewBox="0 0 11 9"><path d="M2 1.5c1-.6 2-.9 3-1l.4.6h.2l.4-.6c1 .1 2 .4 3 1 1 1.6 1.6 3.5 1.5 5.3-.9.7-1.8 1.1-2.7 1.4l-.6-.9c.4-.1.7-.3 1-.5l-.3-.2c-1.7.8-3.7.8-5.4 0l-.3.2c.3.2.6.4 1 .5l-.6.9C1.7 7.9.8 7.5-.1 6.8 0 5 .8 3.1 2 1.5z" fill="#fff"/><circle cx="3.8" cy="4.8" r=".8" fill="#8c8ff0"/><circle cx="7.2" cy="4.8" r=".8" fill="#8c8ff0"/></svg>
<div class="a nw nv" style="left:885px">Live chat!</div>
<!-- user area -->
<div class="a" style="left:1257px;top:87px;width:191px;height:37px;background:#5a56a0"></div>
<div class="a" style="left:1370px;top:87px;width:1px;height:37px;background:#514d93"></div>
<div class="a" style="left:1409px;top:87px;width:1px;height:37px;background:#514d93"></div>
<svg class="a" style="left:1267px;top:95px" width="21" height="21"><use href="#girl"/></svg>
<div class="a nw nv" style="left:1292px">Scarcity2K</div>
<svg class="a" style="left:1381px;top:99px" width="17" height="13" viewBox="0 0 17 13"><rect x="1" y="1" width="15" height="11" rx="1" fill="none" stroke="#b9b6e0" stroke-width="1.6"/><path d="M1.5 2l7 5 7-5" fill="none" stroke="#b9b6e0" stroke-width="1.6"/></svg>
<svg class="a" style="left:1421px;top:97px" width="15" height="17" viewBox="0 0 15 17"><path d="M7.5 1.5a4.5 4.5 0 0 1 4.5 4.5v4l1.8 2.5H1.2L3 10V6a4.5 4.5 0 0 1 4.5-4.5z" fill="none" stroke="#b9b6e0" stroke-width="1.5" stroke-linejoin="round"/><path d="M6 14.5a1.6 1.6 0 0 0 3 0" fill="#b9b6e0" stroke="#b9b6e0"/></svg>
<div class="a" style="left:1455px;top:87px;width:87px;height:37px;background:#5a56a0;border-radius:4px 4px 0 0"></div>
<svg class="a" style="left:1466px;top:97px" width="16" height="16" viewBox="0 0 16 16"><circle cx="6.5" cy="6.5" r="5" fill="none" stroke="#fff" stroke-width="2"/><path d="M10.3 10.3l4.5 4.5" stroke="#fff" stroke-width="2.2" stroke-linecap="round"/></svg>
<div class="a nw nv" style="left:1487px">Search</div>
<!-- scrollbar arrows & thumb -->
<svg class="a" style="left:1906px;top:92px" width="10" height="6" viewBox="0 0 10 6"><path d="M1 6h8L5 1z" fill="#505050"/></svg>
<div class="a" style="left:1905px;top:234px;width:13px;height:782px;background:#c1c1c1"></div>
<svg class="a" style="left:1906px;top:1020px" width="10" height="6" viewBox="0 0 10 6"><path d="M1 0h8L5 5z" fill="#505050"/></svg>

<div id="foot" class="a"></div>
<div id="notif" class="a"></div>
<!-- footer content -->
<svg class="a" style="left:365px;top:896px" width="13" height="13" viewBox="0 0 13 13"><path d="M12 1c-2 1-6 4-8 7l1.5 1.5c3-2 6-6 6.5-8.5z" fill="none" stroke="#fff" stroke-width="1.2" stroke-linejoin="round"/><path d="M3.5 8.5c-1.5 0-2.5 1.5-2.5 3.5 2 0 3.5-1 3.5-2.5" fill="#fff" stroke="#fff" stroke-width="1"/></svg>
<div class="a nw ft" style="left:381px;top:896px;font-size:12.6px">Smogon Classic</div>
<div class="a nw ft" style="left:476px;top:914px;font-size:12.7px">[Please excuse our look during the redesign :)]</div>
<div class="a nw ft" style="left:1235px;top:896px">Terms and rules</div>
<div class="a nw ft" style="left:1340px;top:896px">Privacy policy</div>
<div class="a nw ft" style="left:1432px;top:896px">Help</div>
<div class="a nw ft" style="left:1473px;top:896px">Home</div>
<div class="a" style="left:1523px;top:895px;width:15px;height:15px;background:#f7a428;border-radius:2px"></div>
<svg class="a" style="left:1523px;top:895px" width="15" height="15" viewBox="0 0 15 15"><circle cx="4.5" cy="10.5" r="1.4" fill="#fff"/><path d="M3.5 7a4.5 4.5 0 0 1 4.5 4.5M3.5 4a7.5 7.5 0 0 1 7.5 7.5" fill="none" stroke="#fff" stroke-width="1.6"/></svg>
<div class="a nw" style="left:815px;top:952px;font-size:11px;color:#fff;width:273px;text-align:center">Forum software by XenForo<sup style="font-size:7px">®</sup> © 2010-2020 XenForo Ltd.</div>
<div class="a nw" style="left:815px;top:967px;font-size:11px;color:#fff;width:273px;text-align:center">PMD sprites by SpriteCollab.</div>
<!-- notification bar content -->
<div class="a nw" style="left:703px;top:1002px;font-size:15px;color:#222">Smogon Forums would like your permission to <span style="color:#2a54b8">enable push notifications.</span></div>
<svg class="a" style="left:1880px;top:1002px" width="12" height="12" viewBox="0 0 12 12"><path d="M1 1l10 10M11 1L1 11" stroke="#6e6e6e" stroke-width="1.6"/></svg>

<div id="task" class="a"></div>
<!-- taskbar content -->
<div class="a" style="left:0;top:1032px;width:1919px;height:1px;background:#bdbcb6"></div>
<!-- weather -->
<svg class="a" style="left:16px;top:1038px" width="32" height="32" viewBox="0 0 32 32"><path d="M9 12a7 7 0 0 1 11-5" fill="#f5a623"/><circle cx="13" cy="13" r="6" fill="#f7b32b"/><path d="M6 27a5 5 0 0 1 1-10 7 7 0 0 1 13.5-1A5.5 5.5 0 0 1 25 27z" fill="#a9c8f0"/><path d="M6 27a5 5 0 0 1 0-6h19a5.5 5.5 0 0 1 0 6z" fill="#8fb6ea"/><circle cx="22" cy="8.4" r="7" fill="#c42b1c"/><text x="22" y="12" text-anchor="middle" font-family="Liberation Sans" font-size="10" fill="#fff">1</text></svg>
<div class="a nw" style="left:50px;top:1041px;font-size:12px;color:#1a1a1a">80°F</div>
<div class="a nw" style="left:50px;top:1057px;font-size:12.5px;color:#4a4a4a">Mostly cloudy</div>
<!-- start -->
<svg class="a" style="left:683px;top:1045px" width="23" height="23" viewBox="0 0 23 23"><defs><linearGradient id="wg" x1="0" y1="0" x2="1" y2="1"><stop offset="0" stop-color="#3ccbf4"/><stop offset="1" stop-color="#0a6fd6"/></linearGradient></defs><rect x="0" y="0" width="11" height="11" fill="url(#wg)"/><rect x="12" y="0" width="11" height="11" fill="url(#wg)"/><rect x="0" y="12" width="11" height="11" fill="url(#wg)"/><rect x="12" y="12" width="11" height="11" fill="url(#wg)"/></svg>
<!-- search -->
<div class="a" style="left:720px;top:1041px;width:218px;height:30px;border-radius:15px;background:#f2f2ec;border:1px solid #d2d1cb"></div>
<svg class="a" style="left:730px;top:1048px" width="16" height="16" viewBox="0 0 16 16"><circle cx="6.5" cy="6.5" r="5" fill="none" stroke="#1a1a1a" stroke-width="1.5"/><path d="M10.2 10.2l4.5 4.5" stroke="#1a1a1a" stroke-width="1.7" stroke-linecap="round"/></svg>
<div class="a nw" style="left:756px;top:1048px;font-size:14px;color:#555">Search</div>
<svg class="a" style="left:886px;top:1046px" width="48" height="24" viewBox="0 0 48 24"><path d="M0 19l6-5 40 0 2 5-4 4H4z" fill="#8ec6ea"/><path d="M4 23C8 12 15 4 24 3s16 8 18 20z" fill="#7fb23a"/><path d="M8 20c6-2 12-6 18-9M12 23c8-3 16-8 24-10M18 14c4-2 8-5 14-6" fill="none" stroke="#c8a640" stroke-width="1.6"/><path d="M8 6l2 6M38 11l2 7" stroke="#7a5a2a" stroke-width="1"/><circle cx="9" cy="5" r="3" fill="#5da03a"/><circle cx="40" cy="10" r="3" fill="#5da03a"/></svg>
<!-- task view -->
<svg class="a" style="left:950px;top:1045px" width="24" height="22" viewBox="0 0 24 22"><rect x="6" y="0" width="18" height="16" fill="#f4f4f4" stroke="#ddd" stroke-width=".8"/><rect x="0" y="6" width="16" height="16" fill="#222"/><rect x="0" y="6" width="16" height="9" fill="#bcbcbc"/></svg>
<!-- teams -->
<svg class="a" style="left:994px;top:1044px" width="26" height="24" viewBox="0 0 26 24"><circle cx="21" cy="4" r="2.5" fill="#5b5fc7"/><rect x="17" y="7.5" width="8" height="10" rx="3" fill="#5b5fc7"/><circle cx="14" cy="3.5" r="3.5" fill="#7b83eb"/><path d="M8 8h11v9a6 6 0 0 1-11 3z" fill="#7b83eb"/><rect x="0" y="5" width="14" height="14" fill="#fff" stroke="#e8e8e8" stroke-width=".5"/><text x="7" y="16" text-anchor="middle" font-family="Liberation Sans" font-weight="bold" font-size="10" fill="#4b53bc">T</text></svg>
<!-- folder -->
<svg class="a" style="left:1038px;top:1045px" width="26" height="22" viewBox="0 0 26 22"><path d="M0 2a2 2 0 0 1 2-2h7l3 3h12a2 2 0 0 1 2 2v15a2 2 0 0 1-2 2H2a2 2 0 0 1-2-2z" fill="#e8a90f"/><path d="M0 5h26v15a2 2 0 0 1-2 2H2a2 2 0 0 1-2-2z" fill="#fcd14a"/><rect x="6" y="14.5" width="14" height="7.5" rx="1.5" fill="#1c82d4"/></svg>
<!-- chrome 1 -->
<svg class="a" style="left:1083px;top:1044px" width="24" height="24" viewBox="0 0 24 24"><use href="#chromei"/></svg>
<!-- spotify -->
<svg class="a" style="left:1128px;top:1045px" width="22" height="22" viewBox="0 0 22 22"><circle cx="11" cy="11" r="11" fill="#1ed760"/><path d="M5 8.2c4-1.2 8.5-.9 12 1M5.6 11.5c3.4-1 7-.7 10 .9M6.3 14.6c2.7-.7 5.5-.5 8 .7" fill="none" stroke="#111" stroke-width="1.6" stroke-linecap="round"/></svg>
<!-- active chrome -->
<div class="a" style="left:1164px;top:1037px;width:38px;height:38px;border-radius:4px;background:#eeede7"></div>
<svg class="a" style="left:1171px;top:1044px" width="24" height="24" viewBox="0 0 24 24"><use href="#chromei"/></svg>
<div class="a" style="left:1175px;top:1072px;width:16px;height:3px;border-radius:2px;background:#0067c0"></div>
<!-- discord -->
<svg class="a" style="left:1214px;top:1038px" width="30" height="32" viewBox="0 0 30 32"><circle cx="12.5" cy="18" r="12" fill="#5865f2"/><path d="M7 13.5c1.3-.8 2.6-1.2 4-1.4l.5.8h2l.5-.8c1.4.2 2.7.6 4 1.4 1.3 2.2 1.9 4.6 1.8 7-1.2.9-2.4 1.5-3.6 1.9l-.8-1.2c.5-.2.9-.4 1.3-.7l-.4-.3c-2.3 1.1-5 1.1-7.3 0l-.4.3c.4.3.8.5 1.3.7l-.8 1.2c-1.2-.4-2.4-1-3.6-1.9-.1-2.4.5-4.8 1.8-7z" fill="#fff"/><circle cx="10.4" cy="17.5" r="1.2" fill="#5865f2"/><circle cx="14.6" cy="17.5" r="1.2" fill="#5865f2"/><circle cx="22" cy="9" r="7" fill="#e5484d"/><circle cx="22" cy="9" r="3" fill="#fff"/></svg>
<div class="a" style="left:1224px;top:1073px;width:6px;height:2px;border-radius:1px;background:#777"></div>
<!-- tray -->
<svg class="a" style="left:1588px;top:1051px" width="12" height="8" viewBox="0 0 12 8"><path d="M1 7l5-5 5 5" fill="none" stroke="#222" stroke-width="1.3"/></svg>
<svg class="a" style="left:1617px;top:1048px" width="18" height="16" viewBox="0 0 18 16"><path d="M4.5 13a3.5 3.5 0 0 1-.5-7 5 5 0 0 1 9.5-1A4 4 0 0 1 14 13z" fill="none" stroke="#222" stroke-width="1.4"/><path d="M2 2l14 13" stroke="#222" stroke-width="1.4"/></svg>
<div class="a nw" style="left:1652px;top:1042px;font-size:12px;color:#1a1a1a">ENG</div>
<div class="a nw" style="left:1657px;top:1057px;font-size:12px;color:#1a1a1a">US</div>
<svg class="a" style="left:1693px;top:1048px" width="18" height="15" viewBox="0 0 18 15"><path d="M1 5.5a11.5 11.5 0 0 1 16 0M3.5 8a8 8 0 0 1 11 0M6 10.5a4.2 4.2 0 0 1 6 0" fill="none" stroke="#222" stroke-width="1.3"/><circle cx="9" cy="13" r="1.3" fill="#222"/></svg>
<svg class="a" style="left:1717px;top:1048px" width="18" height="15" viewBox="0 0 18 15"><path d="M1 5h3l4-3.5v12L4 10H1z" fill="none" stroke="#222" stroke-width="1.3" stroke-linejoin="round"/><path d="M11 5a3 3 0 0 1 0 5M13 3a6 6 0 0 1 0 9" fill="none" stroke="#222" stroke-width="1.2"/><path d="M15.5 1.5a8.5 8.5 0 0 1 0 12" fill="none" stroke="#aaa" stroke-width="1"/></svg>
<svg class="a" style="left:1741px;top:1047px" width="18" height="16" viewBox="0 0 18 16"><rect x="1" y="5" width="14" height="9" rx="1.5" fill="none" stroke="#222" stroke-width="1.3"/><rect x="15.5" y="8" width="1.8" height="3" fill="#222"/><rect x="3" y="7" width="10" height="5" fill="#222"/><path d="M6 0l-2 5h3l-1.5 4" fill="none" stroke="#222" stroke-width="1.2"/></svg>
<div class="a nw" style="left:1787px;top:1041px;font-size:12px;color:#1a1a1a">11:47 pm</div>
<div class="a nw" style="left:1775px;top:1057px;font-size:12px;color:#1a1a1a">07/07/2024</div>
<svg class="a" style="left:1845px;top:1048px" width="14" height="16" viewBox="0 0 14 16"><path d="M7 1a4.5 4.5 0 0 1 4.5 4.5v4l2 3H.5l2-3v-4A4.5 4.5 0 0 1 7 1z" fill="#003e92"/><path d="M5 13.5a2 2 0 0 0 4 0z" fill="#003e92"/></svg>
<svg class="a" style="left:1876px;top:1044px" width="26" height="25" viewBox="0 0 26 25"><defs><linearGradient id="cp1" x1="0" y1="1" x2="1" y2="0"><stop offset="0" stop-color="#b4d334"/><stop offset=".5" stop-color="#33b98c"/><stop offset="1" stop-color="#1a8de8"/></linearGradient><linearGradient id="cp2" x1="0" y1="1" x2="1" y2="0"><stop offset="0" stop-color="#f46b5a"/><stop offset=".5" stop-color="#e454b6"/><stop offset="1" stop-color="#9b5ef0"/></linearGradient></defs><path d="M2 14c0-6 3-12 8-12h6l-7 14H3z" fill="url(#cp1)"/><path d="M10 20l7-13h6c1 2 1 8-2 13z" fill="url(#cp2)"/><path d="M13 1h4l2 4h-5z" fill="#1a5fd0"/><rect x="9" y="16" width="16" height="8" rx="2" fill="#ffc300"/><text x="17" y="22.5" text-anchor="middle" font-family="Liberation Sans" font-weight="bold" font-size="7" fill="#111">PRE</text></svg>

</body></html>
